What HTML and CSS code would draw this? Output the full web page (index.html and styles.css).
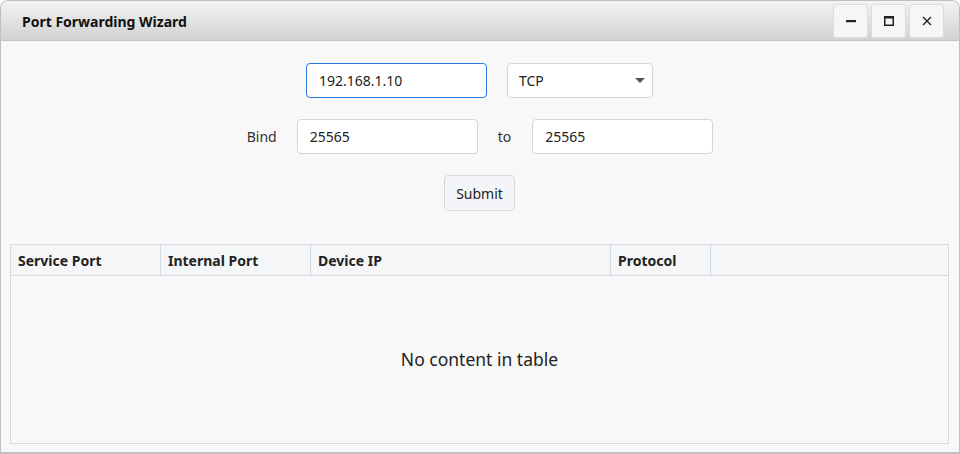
FILE: index.html
```html
<!DOCTYPE html>
<html>
<head>
<meta charset="utf-8">
<link rel="stylesheet" href="styles.css">
</head>
<body>
<div class="window">
  <div class="titlebar">
    <div class="title">Port Forwarding Wizard</div>
    <div class="controls">
      <button class="wbtn"><svg width="12" height="12" viewBox="0 0 12 12"><rect x="1" y="5" width="10" height="2.2" fill="#222"/></svg></button>
      <button class="wbtn"><svg width="12" height="12" viewBox="0 0 12 12"><rect x="1.75" y="1.75" width="8.5" height="8.5" fill="none" stroke="#222" stroke-width="1.5"/><rect x="1" y="1" width="10" height="2.5" fill="#222"/></svg></button>
      <button class="wbtn"><svg width="12" height="12" viewBox="0 0 12 12"><path d="M2 2L10 10M10 2L2 10" stroke="#222" stroke-width="1.4" fill="none"/></svg></button>
    </div>
  </div>
  <div class="content">
    <div class="row row1">
      <input class="field focused ip" type="text" value="192.168.1.10">
      <div class="field select">
        <span>TCP</span>
        <svg width="10" height="6" viewBox="0 0 10 6"><path d="M0 0H10L5 5Z" fill="#555"/></svg>
      </div>
    </div>
    <div class="row row2">
      <span class="label">Bind</span>
      <input class="field port" type="text" value="25565">
      <span class="label to">to</span>
      <input class="field port" type="text" value="25565">
    </div>
    <div class="row row3">
      <button class="submit">Submit</button>
    </div>
    <div class="table">
      <div class="thead">
        <div class="th c1">Service Port</div>
        <div class="th c2">Internal Port</div>
        <div class="th c3">Device IP</div>
        <div class="th c4">Protocol</div>
        <div class="th c5"></div>
      </div>
      <div class="tbody">No content in table</div>
    </div>
  </div>
</div>
</body>
</html>
```

FILE: styles.css
```css
* { box-sizing: border-box; }
html, body { margin: 0; padding: 0; }
body {
  width: 960px;
  height: 454px;
  font-family: "Noto Sans", "Open Sans", sans-serif;
  color: #222;
  background: #ffffff;
  overflow: hidden;
}
.window {
  width: 960px;
  height: 454px;
  border: 1px solid #bfbfbf;
  border-bottom-width: 2px;
  border-radius: 8px 8px 0 0;
  background: #f8f8f8;
  display: flex;
  flex-direction: column;
  overflow: hidden;
}
.titlebar {
  height: 40px;
  flex: none;
  display: flex;
  align-items: center;
  justify-content: space-between;
  background: linear-gradient(#f3f3f3, #d2d2d2);
  border-bottom: 1px solid #c4c4c4;
  padding: 0 15px 0 21px;
}
.title {
  font-weight: 700;
  font-size: 14px;
  color: #111;
  padding-top: 1px;
}
.controls {
  display: flex;
  gap: 3px;
  padding-top: 1px;
}
.wbtn {
  width: 35px;
  height: 34px;
  background: #f5f6f8;
  border: 1px solid #d9dde2;
  border-radius: 3px;
  display: flex;
  align-items: center;
  justify-content: center;
  padding: 0;
}
.content {
  flex: 1;
  display: flex;
  flex-direction: column;
  padding: 22px 10px 8px 9px;
}
.row {
  display: flex;
  justify-content: center;
  align-items: center;
}
.row1 { gap: 20px; }
.row2 { gap: 20px; margin-top: 21px; padding-left: 1px; }
.row3 { margin-top: 21px; }
.field {
  height: 35px;
  border: 1px solid #cfd6de;
  border-radius: 4px;
  background: #fff;
  font-family: inherit;
  font-size: 14px;
  color: #222;
  padding: 0 12px;
  outline: none;
}
.focused { border-color: #2b78e0; }
.ip { width: 181px; }
.select {
  width: 146px;
  display: flex;
  align-items: center;
  justify-content: space-between;
  padding: 0 7px 0 11px;
}
.port { width: 181px; }
.label { font-size: 14px; color: #333; }
.to { margin-right: 1px; }
.submit {
  height: 36px;
  width: 71px;
  border: 1px solid #d3d9e0;
  border-radius: 4px;
  background: #f3f5f8;
  font-family: inherit;
  font-size: 14px;
  color: #222;
  padding: 0;
}
.table {
  margin-top: 33px;
  flex: 1;
  border: 1px solid #d3d9e2;
  display: flex;
  flex-direction: column;
  background: #f8f8f8;
}
.thead {
  height: 31px;
  display: flex;
  background: #f5f6f8;
  border-bottom: 1px solid #d3d9e2;
}
.th {
  font-weight: 700;
  font-size: 14px;
  color: #222;
  padding: 0 7px;
  display: flex;
  align-items: center;
  border-right: 1px solid #d3d9e2;
}
.c1 { width: 150px; }
.c2 { width: 150px; }
.c3 { width: 300px; }
.c4 { width: 100px; }
.c5 { flex: 1; border-right: none; }
.tbody {
  flex: 1;
  display: flex;
  align-items: center;
  justify-content: center;
  font-size: 17.5px;
  color: #222;
  padding-bottom: 1px;
}
```
